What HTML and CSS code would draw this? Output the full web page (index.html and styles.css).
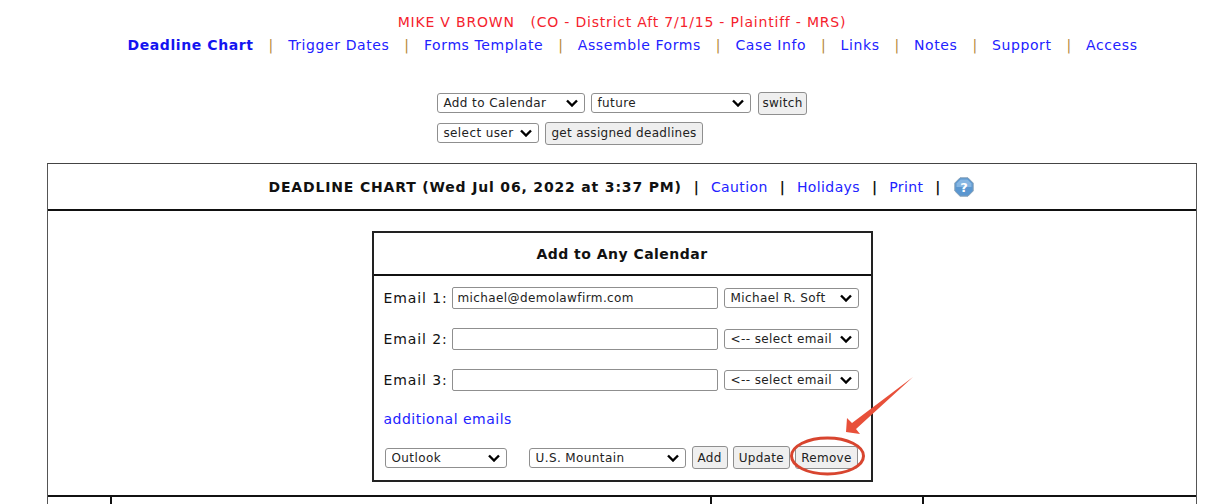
FILE: index.html
```html
<!DOCTYPE html>
<html lang="en">
<head>
<meta charset="utf-8">
<title>Deadline Chart</title>
<link rel="stylesheet" href="styles.css">
</head>
<body>
<div class="page">
  <header class="top">
    <div class="case">MIKE V BROWN &nbsp; (CO - District Aft 7/1/15 - Plaintiff - MRS)</div>
    <nav class="nav">
      <a class="link bold" href="#">Deadline Chart</a><span class="sep">|</span>
      <a class="link" href="#">Trigger Dates</a><span class="sep">|</span>
      <a class="link" href="#">Forms Template</a><span class="sep">|</span>
      <a class="link" href="#">Assemble Forms</a><span class="sep">|</span>
      <a class="link" href="#">Case Info</a><span class="sep">|</span>
      <a class="link" href="#">Links</a><span class="sep">|</span>
      <a class="link" href="#">Notes</a><span class="sep">|</span>
      <a class="link" href="#">Support</a><span class="sep">|</span>
      <a class="link" href="#">Access</a>
    </nav>
  </header>

  <section class="filters">
    <div class="filter-row">
      <select class="ctl sel w-cal"><option>Add to Calendar</option></select>
      <select class="ctl sel w-future"><option>future</option></select>
      <button class="btn w-switch">switch</button>
    </div>
    <div class="filter-row">
      <select class="ctl sel w-user"><option>select user</option></select>
      <button class="btn">get assigned deadlines</button>
    </div>
  </section>

  <section class="panel">
    <div class="panel-head">
      <strong>DEADLINE CHART (Wed Jul 06, 2022 at 3:37 PM)</strong><span class="sep dark">|</span>
      <a class="link" href="#">Caution</a><span class="sep dark">|</span>
      <a class="link" href="#">Holidays</a><span class="sep dark">|</span>
      <a class="link" href="#">Print</a><span class="sep dark">|</span>
      <svg class="help" width="20" height="20" viewBox="0 0 20 20" aria-hidden="true">
        <path d="M6 .8h8L19.200 6v8L14 19.200H6L.8 14V6z" fill="#5b97d0" stroke="#8aa3b8"/>
        <path d="M6.500 2.500h7l4 4V10H2.500V6.500z" fill="#86b6e2"/>
        <text x="10" y="15" text-anchor="middle" class="help-q">?</text>
      </svg>
    </div>
    <div class="panel-body">
      <div class="card">
        <div class="card-title">Add to Any Calendar</div>
        <div class="card-body">
          <div class="email-row">
            <label class="email-label">Email 1:</label>
            <input class="ctl input" type="text" value="michael@demolawfirm.com">
            <select class="ctl sel w-email"><option>Michael R. Soft</option></select>
          </div>
          <div class="email-row">
            <label class="email-label">Email 2:</label>
            <input class="ctl input" type="text">
            <select class="ctl sel w-email"><option>&lt;-- select email</option></select>
          </div>
          <div class="email-row">
            <label class="email-label">Email 3:</label>
            <input class="ctl input" type="text">
            <select class="ctl sel w-email"><option>&lt;-- select email</option></select>
          </div>
          <a class="link more" href="#">additional emails</a>
          <div class="actions">
            <select class="ctl sel w-outlook"><option>Outlook</option></select>
            <select class="ctl sel w-zone"><option>U.S. Mountain</option></select>
            <button class="btn w-add">Add</button>
            <button class="btn">Update</button>
            <button class="btn w-remove">Remove</button>
          </div>
        </div>
      </div>
    </div>
    <div class="table-head">
      <div class="col-a"></div>
      <div class="col-b"></div>
      <div class="col-c"></div>
      <div class="col-d"></div>
    </div>
  </section>
</div>

<svg class="annotation" width="140" height="120" viewBox="0 0 140 120" aria-hidden="true">
  <path d="M123 0 L66 52 L70 57 L56 55 L57 41 L62 46 Z" fill="#e8503a"/>
  <ellipse cx="37.500" cy="79" rx="36" ry="18" fill="none" stroke="#d8452f" stroke-width="3"/>
</svg>
</body>
</html>
```
FILE: styles.css
```css
* { box-sizing: border-box; }
html, body { margin: 0; height: 504px; overflow: hidden; background: #fff; }
body {
  position: relative;
  font-family: "DejaVu Sans", Verdana, sans-serif;
  font-size: 14px;
  color: #111;
}
.page { display: flex; flex-direction: column; align-items: center; padding: 13px 27px 0 47px; }
.top { display: flex; flex-direction: column; align-items: center; width: 100%; }
.case { color: #f5222d; letter-spacing: .8px; line-height: 18px; height: 18px; margin-bottom: 4px; }
.nav { display: flex; align-items: center; justify-content: center; line-height: 20px; white-space: nowrap; margin-left: 21px; }
.link { color: #2222ff; text-decoration: none; letter-spacing: .6px; }
.bold { font-weight: 700; color: #1414f0; }
.sep { color: #b5883a; margin: 0 14.900px; }
.sep.dark { color: #111; margin: 0 12px; font-weight: 700; }
.filters { display: flex; flex-direction: column; align-items: flex-start; gap: 6px; margin-top: 36px; }
.filter-row { display: flex; align-items: center; gap: 6px; height: 24px; }
.ctl {
  font-family: "DejaVu Sans", Verdana, sans-serif;
  font-size: 12px;
  letter-spacing: .4px;
  color: #222;
  background-color: #fff;
  border: 1px solid #8f8f8f;
  border-radius: 3px;
  height: 20px;
  margin: 0;
}
.sel {
  appearance: none;
  padding: 0 20px 0 5px;
  background-image: url("data:image/svg+xml,%3Csvg xmlns='http://www.w3.org/2000/svg' width='12' height='8' viewBox='0 0 12 8'%3E%3Cpath d='M1 1.500 6 6.500l5-5' fill='none' stroke='%23000' stroke-width='2.400'/%3E%3C/svg%3E");
  background-repeat: no-repeat;
  background-position: right 6px center;
  background-size: 12px 8px;
}
.btn {
  font-family: "DejaVu Sans", Verdana, sans-serif;
  font-size: 12px;
  letter-spacing: .3px;
  color: #222;
  height: 23px;
  padding: 0 5px;
  background: #efefef;
  border: 1px solid #8f8f8f;
  border-radius: 3px;
  margin: 0;
}
.w-switch { padding: 0 3px; margin-left: 1px; }
.w-cal { width: 148px; }
.w-future { width: 160px; }
.w-user { width: 102px; }
.panel { width: 1150px; margin-top: 18px; border: 1px solid #555; border-top-color: #444; border-bottom: 0; }
.panel-head {
  display: flex; align-items: center; justify-content: center;
  height: 47px; border-bottom: 2px solid #111; white-space: nowrap; padding-right: 1px;
}
.panel-head strong { letter-spacing: .83px; color: #111; }
.panel-head .link { letter-spacing: .4px; }
.help { margin-left: 2px; }
.help-q { font: 700 13px "DejaVu Sans", sans-serif; fill: #fff; }
.panel-body { display: flex; justify-content: center; height: 284px; padding-top: 20px; }
.card { width: 501px; height: 251px; border: 2px solid #222; }
.card-title {
  height: 43px; border-bottom: 2px solid #111;
  display: flex; align-items: center; justify-content: center;
  font-weight: 700; letter-spacing: .47px;
}
.card-body { padding: 10px 10px 0; }
.card .sel { padding-left: 6px; }
.email-row { display: flex; align-items: center; height: 23px; margin-bottom: 18px; }
.email-label { width: 68px; flex: none; letter-spacing: .9px; }
.input { width: 266px; height: 22px; padding: 0 5px; border-radius: 2px; }
.w-email { width: 135px; margin-left: 6px; }
.card-body .more { display: block; line-height: 18px; margin-top: 19px; letter-spacing: .5px; }
.actions { display: flex; align-items: center; margin-top: 18px; gap: 5px; padding-left: 1px; }
.w-outlook { width: 122px; margin-right: 17px; }
.w-zone { width: 157px; margin-right: 1px; }
.w-add { min-width: 35px; }
.w-remove { min-width: 63px; }
.table-head { display: grid; grid-template-columns: 62px 600px 212px 1fr; border-top: 2px solid #111; height: 10px; }
.col-b, .col-c, .col-d { border-left: 2px solid #111; }
.annotation { position: absolute; left: 790px; top: 377px; }
```
